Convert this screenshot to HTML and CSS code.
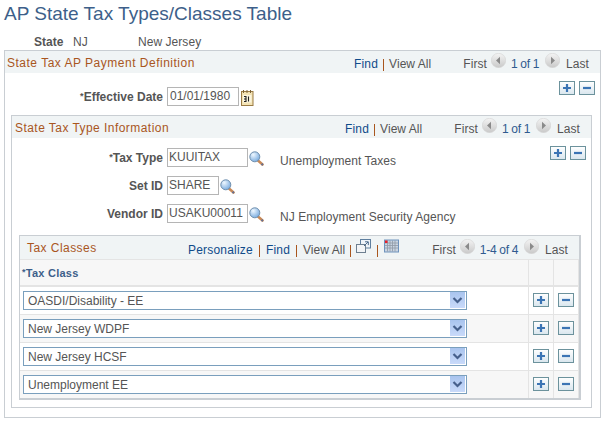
FILE: index.html
```html
<!DOCTYPE html>
<html lang="en">
<head>
<meta charset="utf-8">
<title>AP State Tax Types/Classes Table</title>
<link rel="stylesheet" href="styles.css">
</head>
<body>
<svg class="defs" xmlns="http://www.w3.org/2000/svg">
  <defs>
    <linearGradient id="gBtn" x1="0" y1="0" x2="0" y2="1"><stop offset="0" stop-color="#ffffff"/><stop offset="1" stop-color="#d9e6ee"/></linearGradient>
    <linearGradient id="gPager" x1="0" y1="0" x2="0" y2="1"><stop offset="0" stop-color="#f4f4f4"/><stop offset="1" stop-color="#c9c9c9"/></linearGradient>
    <linearGradient id="gDrop" x1="0" y1="0" x2="0" y2="1"><stop offset="0" stop-color="#a9c4ee"/><stop offset="1" stop-color="#c9dafa"/></linearGradient>
    <radialGradient id="gLens" cx="0.35" cy="0.3" r="0.8"><stop offset="0" stop-color="#eef7ff"/><stop offset="1" stop-color="#6fa5dc"/></radialGradient>
    <symbol id="i-plus" viewBox="0 0 16 14"><rect x=".5" y=".5" width="15" height="13" fill="url(#gBtn)" stroke="#6c929c"/><path d="M4 7h8M8 3v8" stroke="#3b74b4" stroke-width="2.2" fill="none"/></symbol>
    <symbol id="i-minus" viewBox="0 0 16 14"><rect x=".5" y=".5" width="15" height="13" fill="url(#gBtn)" stroke="#6c929c"/><path d="M4 7h8" stroke="#3b74b4" stroke-width="2.2" fill="none"/></symbol>
    <symbol id="i-prev" viewBox="0 0 15 15"><circle cx="7.5" cy="7.5" r="7.2" fill="url(#gPager)" stroke="#d4d4d4" stroke-width=".6"/><path d="M5 7.5L9 3.8V11.2Z" fill="#8a8a8a"/></symbol>
    <symbol id="i-next" viewBox="0 0 15 15"><circle cx="7.5" cy="7.5" r="7.2" fill="url(#gPager)" stroke="#d4d4d4" stroke-width=".6"/><path d="M10 7.5L6 3.8V11.2Z" fill="#8a8a8a"/></symbol>
    <symbol id="i-lookup" viewBox="0 0 15 15"><path d="M9 9.5l4.5 4" stroke="#c98a58" stroke-width="2.6" stroke-linecap="round"/><path d="M12.6 12.8l1.2 1.1" stroke="#5f6f95" stroke-width="2"/><circle cx="5.8" cy="5.8" r="5" fill="url(#gLens)" stroke="#6f8fae"/></symbol>
    <symbol id="i-drop" viewBox="0 0 15 16"><rect width="15" height="16" fill="url(#gDrop)"/><path d="M3.500 6l4 4 4-4" stroke="#46608c" stroke-width="2.200" fill="none"/></symbol>
  </defs>
</svg>

<h1 class="title">AP State Tax Types/Classes Table</h1>
<div class="state-row">
  <span class="state-label">State</span>
  <span class="state-code">NJ</span>
  <span class="plain">New Jersey</span>
</div>

<section class="box outer">
  <header class="bar">
    <h2 class="bar-title">State Tax AP Payment Definition</h2>
    <nav class="nav">
      <a class="link">Find</a><i class="sep"></i><span class="plain">View All</span>
      <span class="plain first">First</span>
      <svg class="pager"><use href="#i-prev"/></svg>
      <span class="count">1 of 1</span>
      <svg class="pager"><use href="#i-next"/></svg>
      <span class="plain">Last</span>
    </nav>
  </header>
  <div class="actions act-outer">
    <svg class="btn"><use href="#i-plus"/></svg>
    <svg class="btn"><use href="#i-minus"/></svg>
  </div>
  <div class="field date-field">
    <label class="lbl"><sup>*</sup>Effective Date</label>
    <div class="input w-date">01/01/1980</div>
    <svg class="cal" viewBox="0 0 13 16">
      <rect x=".5" y="1.5" width="11.5" height="14" fill="#f3e3b4" stroke="#9a7b45"/>
      <path d="M2.5 0v3M6 0v3M9.500 0v3" stroke="#7a6236" stroke-width="1"/>
      <rect x="2" y="5" width="8.500" height="7.500" fill="#fbf5de"/>
      <path d="M3 6.500h2v5H3M3 9h2M7.500 6.500v5" stroke="#1f1f1f" stroke-width="1.100" fill="none"/>
    </svg>
  </div>

  <section class="box inner">
    <header class="bar">
      <h2 class="bar-title">State Tax Type Information</h2>
      <nav class="nav">
        <a class="link">Find</a><i class="sep"></i><span class="plain">View All</span>
        <span class="plain first">First</span>
        <svg class="pager"><use href="#i-prev"/></svg>
        <span class="count">1 of 1</span>
        <svg class="pager"><use href="#i-next"/></svg>
        <span class="plain">Last</span>
      </nav>
    </header>
    <div class="actions act-inner">
      <svg class="btn"><use href="#i-plus"/></svg>
      <svg class="btn"><use href="#i-minus"/></svg>
    </div>
    <div class="field f-type">
      <label class="lbl"><sup>*</sup>Tax Type</label>
      <div class="input w-long">KUUITAX</div>
      <svg class="lookup"><use href="#i-lookup"/></svg>
      <span class="plain desc">Unemployment Taxes</span>
    </div>
    <div class="field f-set">
      <label class="lbl">Set ID</label>
      <div class="input w-short">SHARE</div>
      <svg class="lookup"><use href="#i-lookup"/></svg>
    </div>
    <div class="field f-vendor">
      <label class="lbl">Vendor ID</label>
      <div class="input w-long">USAKU00011</div>
      <svg class="lookup"><use href="#i-lookup"/></svg>
      <span class="plain desc">NJ Employment Security Agency</span>
    </div>

    <section class="grid">
      <header class="bar grid-bar">
        <h2 class="bar-title">Tax Classes</h2>
        <nav class="nav">
          <a class="link">Personalize</a><i class="sep"></i><a class="link">Find</a><i class="sep"></i><span class="plain">View All</span><i class="sep"></i>
          <svg class="tool" viewBox="0 0 15 14">
            <rect x="4.500" y=".5" width="10" height="8.500" fill="#eef3f8" stroke="#5f7f9f"/>
            <rect x=".5" y="5.500" width="9" height="8" fill="#f2f4f6" stroke="#6d7f90"/>
            <path d="M8 7l4-4M9 2.800h3.300v3.300" stroke="#4a6a8c" fill="none"/>
          </svg>
          <i class="sep"></i>
          <svg class="tool" viewBox="0 0 15 13">
            <rect x=".5" y=".5" width="14" height="12" fill="#c9d4e2" stroke="#6f93bd"/>
            <path d="M1 3.500h13M1 6h13M1 8.500h13M3.500 1v11M6 1v11M8.500 1v11M11 1v11" stroke="#8f99a6" stroke-width=".8"/>
            <rect x="1" y="1" width="2.500" height="2.500" fill="#e8202a"/>
          </svg>
          <span class="plain first grid-first">First</span>
          <svg class="pager"><use href="#i-prev"/></svg>
          <span class="count">1-4 of 4</span>
          <svg class="pager"><use href="#i-next"/></svg>
          <span class="plain">Last</span>
        </nav>
      </header>
      <table class="tbl">
        <thead>
          <tr><th class="th-main"><sup>*</sup>Tax Class</th><th class="th-act"></th><th class="th-act"></th></tr>
        </thead>
        <tbody>
          <tr>
            <td><div class="select"><span class="sel-text">OASDI/Disability - EE</span><svg class="drop"><use href="#i-drop"/></svg></div></td>
            <td class="cell-act"><svg class="btn"><use href="#i-plus"/></svg></td>
            <td class="cell-act"><svg class="btn"><use href="#i-minus"/></svg></td>
          </tr>
          <tr class="alt">
            <td><div class="select"><span class="sel-text">New Jersey WDPF</span><svg class="drop"><use href="#i-drop"/></svg></div></td>
            <td class="cell-act"><svg class="btn"><use href="#i-plus"/></svg></td>
            <td class="cell-act"><svg class="btn"><use href="#i-minus"/></svg></td>
          </tr>
          <tr>
            <td><div class="select"><span class="sel-text">New Jersey HCSF</span><svg class="drop"><use href="#i-drop"/></svg></div></td>
            <td class="cell-act"><svg class="btn"><use href="#i-plus"/></svg></td>
            <td class="cell-act"><svg class="btn"><use href="#i-minus"/></svg></td>
          </tr>
          <tr class="alt">
            <td><div class="select"><span class="sel-text">Unemployment EE</span><svg class="drop"><use href="#i-drop"/></svg></div></td>
            <td class="cell-act"><svg class="btn"><use href="#i-plus"/></svg></td>
            <td class="cell-act"><svg class="btn"><use href="#i-minus"/></svg></td>
          </tr>
        </tbody>
      </table>
    </section>
  </section>
</section>
</body>
</html>
```

FILE: styles.css
```css
* { box-sizing: border-box; }
html, body { margin: 0; padding: 0; background: #fff; }
body {
  width: 607px;
  height: 424px;
  overflow: hidden;
  font-family: "Liberation Sans", Arial, sans-serif;
  font-size: 12px;
  color: #555;
}
.defs { display: block; width: 0; height: 0; overflow: hidden; }
sup { font-size: 9px; line-height: 0; vertical-align: 2px; font-weight: bold; }

.title {
  margin: 0;
  padding: 2px 0 0 4px;
  height: 34px;
  font-size: 19px;
  line-height: 24px;
  font-weight: normal;
  color: #3d5f8a;
}
.state-row {
  display: flex;
  align-items: center;
  height: 16px;
  padding-left: 34px;
}
.state-label { width: 39px; font-weight: bold; }
.state-code { width: 65px; }
.plain { letter-spacing: .05px; white-space: nowrap; }

.box { border: 1px solid #c9ced3; }
.outer { margin-left: 4px; width: 597px; height: 368px; }
.inner { margin: 9px 0 0 6px; width: 581px; height: 293px; }

.bar {
  display: flex;
  justify-content: space-between;
  align-items: center;
  height: 22px;
  background: #f0f4f5;
}
.bar-title {
  margin: 0;
  padding: 1px 0 0 2px;
  font-size: 12px;
  font-weight: normal;
  color: #a9561e;
  letter-spacing: .5px;
  white-space: nowrap;
}
.inner .bar-title { padding-left: 3px; letter-spacing: .45px; }
.nav { display: flex; align-items: center; padding: 4px 11px 0 0; }
.link { color: #0f4b8a; letter-spacing: .2px; }
.sep { display: block; width: 1px; height: 12px; margin: 2px 5px 0; background: #a9561e; }
.first { margin-left: 32px; }
.count { color: #2f5a8f; white-space: nowrap; margin: 0 6px 0 5px; letter-spacing: -.3px; }
.pager { width: 15px; height: 15px; margin: -7px 0 0 4px; }
.pager + .plain { margin-left: 6px; }
.count + .pager { margin-left: 0; }

.actions { display: flex; justify-content: flex-end; gap: 4px; }
.btn { display: block; width: 16px; height: 14px; }
.act-outer { margin-top: 8px; padding-right: 5px; height: 14px; }
.act-inner { margin-top: 8px; padding-right: 5px; height: 14px; }

.field { display: flex; align-items: center; height: 19px; }
.lbl {
  font-weight: bold;
  text-align: right;
  white-space: nowrap;
  margin-right: 4px;
}
.date-field { margin-top: -8px; }
.date-field .lbl { width: 158px; }
.f-type .lbl, .f-set .lbl, .f-vendor .lbl { width: 151px; }
.f-type { margin-top: -12px; }
.f-set { margin-top: 9px; }
.f-vendor { margin-top: 9px; }
.input {
  height: 19px;
  border: 1px solid #b5b5b5;
  padding-left: 1px;
  line-height: 17px;
  white-space: nowrap;
  overflow: hidden;
  background: #fff;
}
.w-date { width: 72px; padding-left: 2px; }
.w-long { width: 81px; }
.w-short { width: 52px; }
.cal { width: 13px; height: 16px; margin: 2px 0 0 2px; }
.lookup { width: 15px; height: 15px; margin: 2px 0 0 1px; }
.desc { margin: 6px 0 0 16px; }

.grid {
  margin: 12px 0 0 7px;
  width: 562px;
  border: 1px solid #c9ced3;
  border-right-width: 2px;
  border-bottom-width: 2px;
}
.grid-bar { height: 24px; border-bottom: 1px solid #e4e4e4; }
.grid-bar .bar-title { padding-left: 7px; letter-spacing: .45px; }
.grid-bar .sep { margin: 2px 6px 0; }
.grid-bar .plain + .sep { margin: 2px 5px 0; }
.grid-first { margin-left: 33px; }
.tool { display: block; width: 15px; height: 14px; margin-top: -8px; }

.tbl { width: 100%; border-collapse: collapse; table-layout: fixed; }
.tbl th {
  height: 26px;
  background: #f7f7f7;
  border-bottom: 2px solid #e4e4e4;
  border-right: 1px solid #e4e4e4;
  padding: 0;
  text-align: left;
}
.th-main { padding-left: 2px !important; color: #3d5f8a; font-size: 11px; font-weight: bold; letter-spacing: .25px; }
.th-act { width: 25px; }
.tbl td {
  height: 28px;
  padding: 0;
  border-bottom: 1px solid #e4e4e4;
  border-right: 1px solid #e4e4e4;
}
.tbl tbody tr:last-child td { border-bottom: 0; }
.alt td { background: #f7f7f7; }
.cell-act .btn { margin: 0 auto; }
.select {
  display: flex;
  align-items: center;
  justify-content: space-between;
  width: 444px;
  height: 19px;
  margin-left: 3px;
  padding: 0 1px 0 4px;
  border: 1px solid #7a9fbd;
  background: #fff;
}
.sel-text { white-space: nowrap; padding-top: 1px; }
.drop { display: block; width: 15px; height: 16px; }
```
